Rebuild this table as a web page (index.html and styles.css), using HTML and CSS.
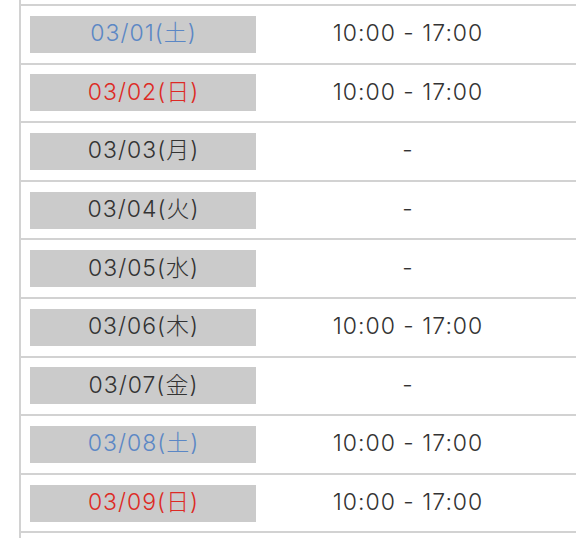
FILE: index.html
```html
<!DOCTYPE html>
<html lang="ja">
<head>
<meta charset="utf-8">
<link rel="stylesheet" href="styles.css">
</head>
<body>
<div class="schedule">
  <div class="row"><div class="date-cell"><span class="date sat">03/01(土)</span></div><div class="time">10:00 - 17:00</div></div>
  <div class="row"><div class="date-cell"><span class="date sun">03/02(日)</span></div><div class="time">10:00 - 17:00</div></div>
  <div class="row"><div class="date-cell"><span class="date">03/03(月)</span></div><div class="time">-</div></div>
  <div class="row"><div class="date-cell"><span class="date">03/04(火)</span></div><div class="time">-</div></div>
  <div class="row"><div class="date-cell"><span class="date">03/05(水)</span></div><div class="time">-</div></div>
  <div class="row"><div class="date-cell"><span class="date">03/06(木)</span></div><div class="time">10:00 - 17:00</div></div>
  <div class="row"><div class="date-cell"><span class="date">03/07(金)</span></div><div class="time">-</div></div>
  <div class="row"><div class="date-cell"><span class="date sat">03/08(土)</span></div><div class="time">10:00 - 17:00</div></div>
  <div class="row last"><div class="date-cell"><span class="date sun">03/09(日)</span></div><div class="time">10:00 - 17:00</div></div>
</div>
</body>
</html>
```

FILE: styles.css
```css
html, body {
  margin: 0;
  padding: 0;
  background: #ffffff;
  overflow: hidden;
}

body {
  font-family: Inter, "Noto Sans CJK JP", sans-serif;
  font-weight: 300;
  color: #333333;
}

.schedule {
  margin-left: 19px;
  padding-top: 4px;
  border-left: 2px solid #d2d2d2;
  height: 538px;
  box-sizing: border-box;
}

.row {
  display: flex;
  align-items: center;
  height: 58.6px;
  box-sizing: border-box;
  border-top: 2px solid #d2d2d2;
}

.row.last {
  height: 60.6px;
  border-bottom: 2px solid #d2d2d2;
}

.date-cell {
  width: 235px;
  padding-left: 9px;
  display: flex;
}

.date {
  display: flex;
  align-items: center;
  justify-content: center;
  width: 226px;
  height: 37px;
  padding-bottom: 1px;
  padding-left: 1px;
  box-sizing: border-box;
  background: #cbcbcb;
  font-size: 23px;
  letter-spacing: 1px;
  line-height: 1;
}

.date.sat { color: #5b87c5; }
.date.sun { color: #dd2a25; }

.time {
  flex: 1;
  text-align: center;
  padding-right: 25px;
  padding-bottom: 1px;
  font-size: 23px;
  letter-spacing: 1px;
  line-height: 1;
  color: #333333;
}
```
